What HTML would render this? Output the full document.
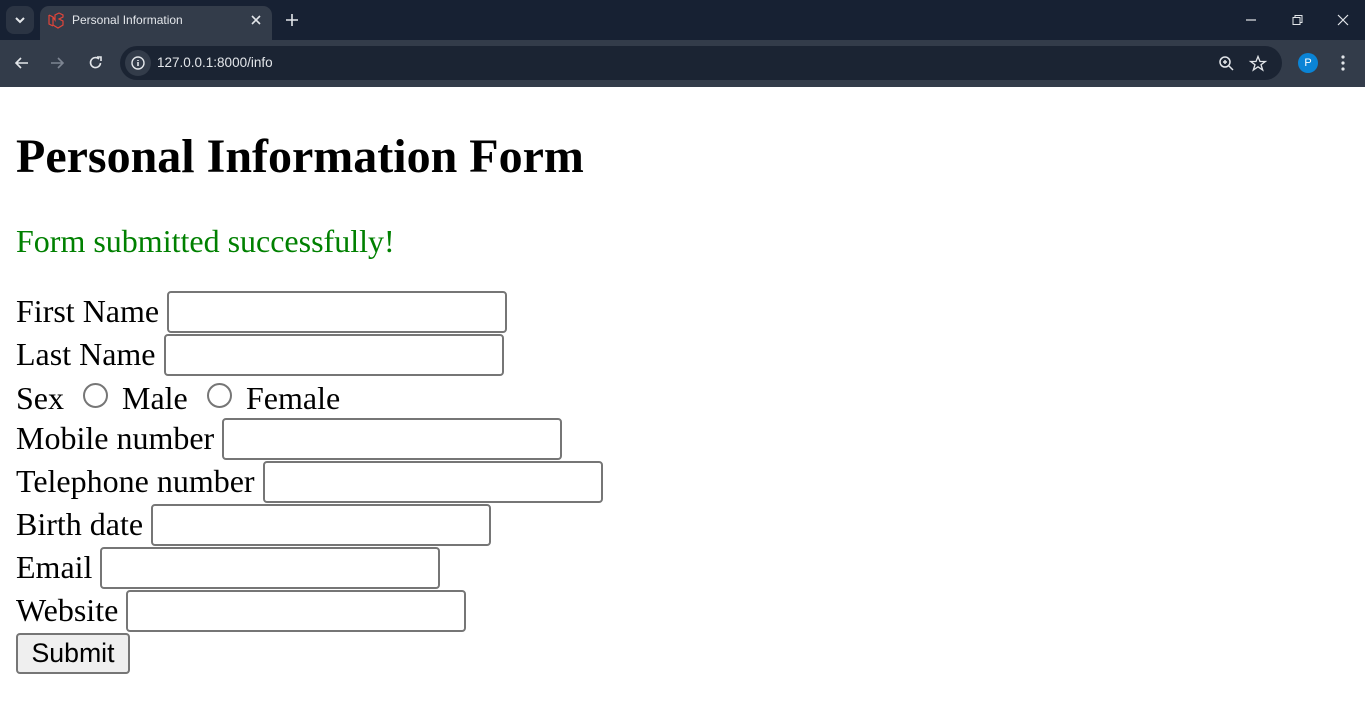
<!DOCTYPE html>
<html><head><meta charset="utf-8"><style>
*{margin:0;padding:0;box-sizing:border-box}
body{width:1365px;height:715px;position:relative;overflow:hidden;background:#fff;font-family:"Liberation Serif",serif}
.top{position:absolute;left:0;top:0;width:1365px;height:40px;background:#172133}
.tab{position:absolute;left:40px;top:6px;width:232px;height:36px;background:#333c4a;border-radius:9px 9px 0 0}
.tb{position:absolute;left:0;top:40px;width:1365px;height:47px;background:#333c4a}
.omni{position:absolute;left:120px;top:46px;width:1162px;height:34px;background:#1b2433;border-radius:17px}
.ui{position:absolute;font-family:"Liberation Sans",sans-serif;color:#e3e6ea}
.a{position:absolute}
.lbl{position:absolute;left:16px;font-size:32px;line-height:36px;white-space:nowrap}
.in{position:absolute;width:340px;height:42px;border:2px solid #767676;border-radius:4px;background:#fff}
.rad{position:absolute;width:25px;height:25px;border:2px solid #767676;border-radius:50%;top:383px}
</style></head><body>
<div class="top"></div>
<div class="a" style="left:6px;top:6px;width:28px;height:28px;background:#2b3443;border-radius:8px"></div>
<svg class="a" style="left:13px;top:14px" width="14" height="12"><path d="M3 4l4 4 4-4" stroke="#e3e6ea" stroke-width="2" fill="none"/></svg>
<div class="tab"></div>
<svg class="a" style="left:47px;top:12px" width="17" height="17" viewBox="0 0 17 17"><path d="M2 3l4 2v8l5 3 5-3V9l-4-2 4-2V3l-4-2-4 2v5L6 5 2 3zm0 0v9l4 2" stroke="#e0453a" stroke-width="1.2" fill="none"/></svg>
<div class="ui" style="left:72px;top:13px;font-size:12px">Personal Information</div>
<svg class="a" style="left:250px;top:14px" width="12" height="12"><path d="M2 2l8 8M10 2l-8 8" stroke="#e3e6ea" stroke-width="1.6"/></svg>
<svg class="a" style="left:285px;top:13px" width="14" height="14"><path d="M7 1v12M1 7h12" stroke="#e3e6ea" stroke-width="1.6"/></svg>
<svg class="a" style="left:1240px;top:14px" width="120" height="14"><path d="M6 6h10" stroke="#e3e6ea" stroke-width="1.2"/><rect x="53" y="3.5" width="7" height="7" stroke="#e3e6ea" fill="none"/><path d="M55 3.5V1.5h7v7h-2" stroke="#e3e6ea" fill="none"/><path d="M98 1l10 10M108 1l-10 10" stroke="#e3e6ea" stroke-width="1.2"/></svg>
<div class="tb"></div>
<svg class="a" style="left:13px;top:55px" width="100" height="16"><path d="M15 8H3M8 3L3 8l5 5" stroke="#e3e6ea" stroke-width="1.6" fill="none"/><path d="M38 8h12M45 3l5 5-5 5" stroke="#7d8592" stroke-width="1.6" fill="none"/><path d="M86 4a5 5 0 1 0 1.5 4" stroke="#e3e6ea" stroke-width="1.6" fill="none"/><path d="M84 2h4v4" stroke="#e3e6ea" stroke-width="1.6" fill="none"/></svg>
<div class="omni"></div>
<div class="a" style="left:125px;top:50px;width:26px;height:26px;background:#333c4a;border-radius:50%"></div>
<svg class="a" style="left:131px;top:56px" width="14" height="14"><circle cx="7" cy="7" r="6" stroke="#e3e6ea" stroke-width="1.4" fill="none"/><path d="M7 6v4M7 4v1" stroke="#e3e6ea" stroke-width="1.6"/></svg>
<div class="ui" style="left:157px;top:55px;font-size:13.5px">127.0.0.1:8000/info</div>
<svg class="a" style="left:1218px;top:55px" width="50" height="18"><circle cx="7" cy="7" r="5" stroke="#e3e6ea" stroke-width="1.5" fill="none"/><path d="M11 11l4 4M5 7h4M7 5v4" stroke="#e3e6ea" stroke-width="1.5"/><path d="M40 1.5l2 5h5.3l-4.3 3.2 1.7 5.3-4.7-3.2-4.7 3.2 1.7-5.3-4.3-3.2h5.3z" stroke="#e3e6ea" stroke-width="1.3" fill="none"/></svg>
<div class="a" style="left:1298px;top:53px;width:20px;height:20px;border-radius:50%;background:#0a84d6;color:#fff;font:11px 'Liberation Sans',sans-serif;text-align:center;line-height:20px">P</div>
<svg class="a" style="left:1340px;top:54px" width="6" height="18"><circle cx="3" cy="3" r="1.6" fill="#e3e6ea"/><circle cx="3" cy="9" r="1.6" fill="#e3e6ea"/><circle cx="3" cy="15" r="1.6" fill="#e3e6ea"/></svg>

<div class="a" style="left:16px;top:129px;font-size:48px;font-weight:bold;line-height:55px;white-space:nowrap">Personal Information Form</div>
<div class="lbl" style="top:223px;color:#008000">Form submitted successfully!</div>

<div class="lbl" style="top:293px">First Name</div><div class="in" style="left:167px;top:291px"></div>
<div class="lbl" style="top:336px">Last Name</div><div class="in" style="left:164px;top:334px"></div>
<div class="lbl" style="top:380px">Sex</div>
<div class="rad" style="left:83px"></div><div class="lbl" style="top:380px;left:122px">Male</div>
<div class="rad" style="left:207px"></div><div class="lbl" style="top:380px;left:246px">Female</div>
<div class="lbl" style="top:420px">Mobile number</div><div class="in" style="left:222px;top:418px"></div>
<div class="lbl" style="top:463px">Telephone number</div><div class="in" style="left:263px;top:461px"></div>
<div class="lbl" style="top:506px">Birth date</div><div class="in" style="left:151px;top:504px"></div>
<div class="lbl" style="top:549px">Email</div><div class="in" style="left:100px;top:547px"></div>
<div class="lbl" style="top:592px">Website</div><div class="in" style="left:126px;top:590px"></div>
<div class="a" style="left:16px;top:633px;width:114px;height:41px;background:#efefef;border:2px solid #767676;border-radius:4px;font:26.7px 'Liberation Sans',sans-serif;text-align:center;line-height:37px">Submit</div>
</body></html>
